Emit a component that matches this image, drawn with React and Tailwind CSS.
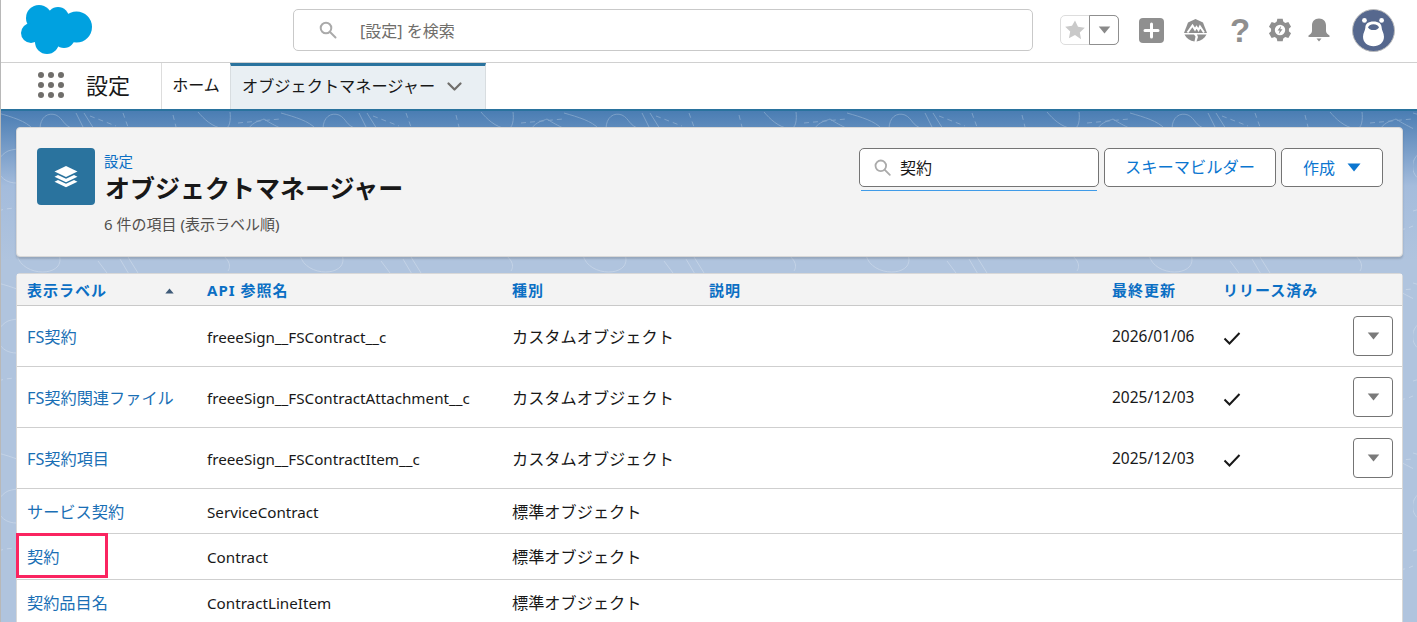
import React from "react";

const Caret = ({ cls = "" }) => (
  <svg viewBox="0 0 14 9" className={cls} fill="currentColor"><path d="M0.5 0.5h13L7 8.5z" /></svg>
);

const Cloud = () => (
  <svg width="72" height="50" viewBox="0 0 72 50" fill="#00a1e0" className="block">
    <circle cx="18" cy="13" r="13" />
    <circle cx="37" cy="13" r="11" />
    <circle cx="55.500" cy="22" r="15.500" />
    <circle cx="10" cy="28" r="10" />
    <circle cx="26" cy="37" r="12" />
    <circle cx="43" cy="32" r="11" />
    <rect x="10" y="12" width="40" height="22" />
  </svg>
);

const rows = [
  { h: "h-[61px]", label: "FS契約", api: "freeeSign__FSContract__c", kind: "カスタムオブジェクト", date: "2026/01/06", check: true },
  { h: "h-[61px]", label: "FS契約関連ファイル", api: "freeeSign__FSContractAttachment__c", kind: "カスタムオブジェクト", date: "2025/12/03", check: true },
  { h: "h-[61px]", label: "FS契約項目", api: "freeeSign__FSContractItem__c", kind: "カスタムオブジェクト", date: "2025/12/03", check: true },
  { h: "h-[45px]", label: "サービス契約", api: "ServiceContract", kind: "標準オブジェクト" },
  { h: "h-[46px]", label: "契約", api: "Contract", kind: "標準オブジェクト", mark: true },
  { h: "h-[46px]", label: "契約品目名", api: "ContractLineItem", kind: "標準オブジェクト" },
];

const cols = "grid grid-cols-[190px_305px_197px_403px_111px_130px_1fr] items-center";

const Contours = () => (
  <svg className="absolute inset-0 w-full h-full opacity-25" fill="none" stroke="#ffffff" strokeWidth="1">
    <defs>
      <pattern id="topo" x="-3" y="0" width="283" height="170" patternUnits="userSpaceOnUse">
        <path d="M0 2C14 6 28 10 35 18M42 18C42 6 50 1 58 4C66 8 64 14 76 18M78 2L86 18M86 2L96 18M200 1C206 8 214 16 226 18C232 18 233 8 232 1M250 18C256 10 262 10 266 8C272 12 276 14 284 18" />
        <path d="M92 5L118 15M125 2L130 16M175 4L178 16M240 12L282 8" strokeDasharray="5 4" />
        <path d="M10 40C40 30 60 60 30 70C0 80-10 50 10 40ZM90 30C120 20 150 40 140 60C130 80 90 70 90 30ZM190 40C220 30 260 50 250 80C240 100 190 90 190 40Z" />
        <path d="M110 40C125 36 135 45 130 55C122 65 105 58 110 40ZM205 50C220 44 240 55 236 72C228 84 200 75 205 50Z" />
        <path d="M0 100C30 90 50 110 80 105M100 90C120 110 150 120 180 105M200 110C230 100 250 130 283 115" strokeDasharray="5 4" />
        <path d="M20 130C40 120 70 140 60 155C50 168 10 160 20 130ZM100 150L115 170M122 148L135 170M130 146L145 170M170 140C200 125 240 145 230 160" />
      </pattern>
    </defs>
    <rect width="100%" height="100%" fill="url(#topo)" stroke="none" />
  </svg>
);

export default function App() {
  return (
    <div className="w-[1417px] h-[622px] overflow-hidden bg-white border-l border-[#b8b8b8] text-[#181818] font-['Noto_Sans','Noto_Sans_CJK_JP',sans-serif] text-[16px] flex flex-col">
      {/* global header */}
      <header className="h-[63px] shrink-0 flex items-center border-b border-[#d0d0d0] bg-white">
        <div className="w-[292px] pl-5 shrink-0 self-start pt-[5px]"><Cloud /></div>
        <div className="w-[740px] h-[42px] -mt-[3px] shrink-0 rounded-[5px] border border-[#c9c9c9] flex items-center text-[#706e6b] text-[16px]">
          <svg width="18" height="18" viewBox="0 0 18 18" fill="none" stroke="#aaaaaa" strokeWidth="2" className="ml-[25px]"><circle cx="7" cy="7" r="5.300" /><path d="M11 11l5.500 5.500" strokeLinecap="round" /></svg>
          <span className="ml-[23px] pt-[2px]">[設定] を検索</span>
        </div>
        <div className="ml-[27px] flex items-center -mt-[2px]">
          <div className="w-[59px] h-[30px] flex rounded-[5px] border border-[#dddddd]">
            <div className="w-[28px] flex items-center justify-center">
              <svg width="20" height="20" viewBox="0 0 20 20" fill="#c9c9c9"><path d="M10 0.500l3 6.300 6.800.9-5 4.700 1.300 6.800L10 15l-6.100 3.200 1.300-6.800-5-4.700 6.800-.9z" /></svg>
            </div>
            <div className="flex-1 -my-px -mr-px border border-[#8f8f8f] rounded-r-[5px] flex items-center justify-center text-[#8a8a8a]"><Caret cls="w-[13px] h-[8px]" /></div>
          </div>
          <div className="ml-[20px] w-[25px] h-[25px] rounded-[4px] bg-[#8f8f8f] flex items-center justify-center">
            <svg width="17" height="17" viewBox="0 0 17 17" stroke="#fff" strokeWidth="3" strokeLinecap="round"><path d="M8.500 2v13M2 8.500h13" /></svg>
          </div>
          <svg className="ml-[19px]" width="25" height="25" viewBox="0 0 25 25" fill="#8f8f8f">
            <path d="M12.500 1L20 4.500 24 15H1L5 4.500z" />
            <path d="M1.500 16.500h9.500l1.500 2-1 5C7 23 3.500 20.500 1.500 16.500zM14 16.500h9.500c-2 4-5.500 6.500-10 7l1.500-4.500z" />
            <path d="M4.500 14.500L9.500 7.500l2.500 4 1.500-2.500 2 3L17 8.500l4 6" fill="none" stroke="#fff" strokeWidth="2" />
          </svg>
          <div className="ml-[19px] w-[26px] text-center text-[#8f8f8f] text-[33px] leading-none font-bold font-['Liberation_Sans',sans-serif]">?</div>
          <svg className="ml-[15px]" width="24" height="24" viewBox="0 0 24 24" fill="#8f8f8f">
            <g>
              {[0, 60, 120, 180, 240, 300].map((a) => (
                <path key={a} transform={`rotate(${a} 12 12)`} d="M9.300 0.800h5.400l.8 4H8.500z" />
              ))}
            </g>
            <path fillRule="evenodd" d="M12 3a9 9 0 100 18 9 9 0 000-18zM12 6.800a5.200 5.200 0 110 10.400 5.200 5.200 0 010-10.400z" />
            <path d="M13.200 7.800l-3.700 4.700h2.200l-1 3.700 3.800-4.900h-2.200z" />
          </svg>
          <svg className="ml-[15px]" width="24" height="24" viewBox="0 0 24 24" fill="#8f8f8f">
            <path d="M12 0.500c-4.500 0-7 3-7 7v5.500c0 2-1.500 3-3.500 4.500v1.500h21v-1.500c-2-1.500-3.500-2.500-3.500-4.500V7.500c0-4-2.500-7-7-7z" />
            <path d="M9.500 20.500h5L12 23.500z" />
          </svg>
          <div className="ml-[21px] w-[43px] h-[43px] rounded-full bg-[#56688e] border border-[#bdbdbd] relative overflow-hidden">
            <svg viewBox="0 0 43 43" className="absolute inset-0 w-full h-full">
              <circle cx="12" cy="11" r="2.500" fill="#fff" />
              <circle cx="30" cy="11" r="2.500" fill="#fff" />
              <path d="M21.500 12c5.500 0 8.500 2.500 8.500 6 0 3 2.500 6 2.500 10 0 6-5 10-11 10s-11-4-11-10c0-4 2.500-7 2.500-10 0-3.500 3-6 8.500-6z" fill="#fff" />
              <ellipse cx="21.500" cy="18" rx="5.500" ry="3" fill="#56688e" />
            </svg>
          </div>
        </div>
      </header>

      {/* nav bar */}
      <nav className="h-[46px] shrink-0 flex bg-white">
        <div className="w-[161px] border-r border-[#dddddd] flex items-center pb-[2px]">
          <div className="ml-[37px] grid grid-cols-3 gap-[4px]">
            {Array.from({ length: 9 }).map((_, i) => (
              <span key={i} className="block w-[6px] h-[6px] rounded-full bg-[#706e6b]" />
            ))}
          </div>
          <span className="ml-[22px] text-[22px] leading-none">設定</span>
        </div>
        <div className="w-[68px] flex items-center justify-center text-[16px] pb-[2px]">ホーム</div>
        <div className="w-[256px] border-t-[3px] border-[#2a739e] border-x border-x-[#d8dde0] bg-[#e9eff3] flex items-center pl-[11px] text-[16.200px] pb-[2px]">
          <span className="whitespace-nowrap">オブジェクトマネージャー</span>
          <svg className="ml-[12px]" width="15" height="9" viewBox="0 0 15 9" fill="none" stroke="#706e6b" strokeWidth="2.200" strokeLinecap="round" strokeLinejoin="round"><path d="M1.500 1.500L7.500 7.500l6-6" /></svg>
        </div>
      </nav>

      {/* content */}
      <main className="relative flex-1 border-t-[2px] border-[#2a739e] bg-gradient-to-b from-[#4a7db3] via-[#a4bcdc] to-[#b0c4de] bg-[length:100%_150px] bg-no-repeat bg-[#b0c4de] pl-[15px] pr-[14px] pt-[16px]">
        <Contours />
        <section className="relative h-[130px] rounded-[4px] bg-[#f3f3f3] border border-[#d8d8d8] shadow-[0_2px_2px_rgba(0,0,0,0.15)] flex">
          <div className="ml-[20px] mt-[20px] w-[58px] h-[57px] rounded-[4px] bg-[#2a739e] flex items-center justify-center">
            <svg width="26" height="26" viewBox="0 0 26 26" fill="#fff">
              <path d="M13 2l11.500 5.500L13 13 1.500 7.500z" />
              <path d="M5 11l8 3.800L21 11l3.500 1.700L13 18.300 1.500 12.700z" />
              <path d="M5 16l8 3.800L21 16l3.500 1.700L13 23.300 1.500 17.700z" />
            </svg>
          </div>
          <div className="ml-[10px] mt-[22px] flex flex-col">
            <span className="text-[14.500px] leading-[22px] text-[#0b6fc4] -ml-px">設定</span>
            <h1 className="text-[25px] leading-[32px] font-bold">オブジェクトマネージャー</h1>
            <span className="text-[15px] leading-[20px] text-[#514f4d] mt-[10px] -ml-px">6 件の項目 (表示ラベル順)</span>
          </div>
          <div className="ml-auto mr-[19px] mt-[20px] flex items-start gap-[5px]">
            <div className="relative">
              <div className="w-[240px] h-[39px] rounded-[5px] border border-[#747474] bg-white flex items-center">
                <svg width="17" height="17" viewBox="0 0 17 17" fill="none" stroke="#aaaaaa" strokeWidth="1.800" className="ml-[14px]"><circle cx="6.800" cy="6.800" r="5.300" /><path d="M10.800 10.800l5 5" strokeLinecap="round" /></svg>
                <span className="ml-[9px] text-[16px]">契約</span>
              </div>
              <div className="absolute left-[2px] right-[2px] top-[42px] h-px bg-[#3f9be8]" />
            </div>
            <button className="w-[172px] h-[39px] rounded-[5px] border border-[#747474] bg-white text-[#0b76d0] text-[16.250px]">スキーマビルダー</button>
            <button className="w-[102px] h-[39px] rounded-[5px] border border-[#747474] bg-white text-[#0b76d0] text-[16px] flex items-center justify-center gap-[12px]">
              <span>作成</span><Caret cls="w-[14px] h-[9px]" />
            </button>
          </div>
        </section>

        <section className="relative mt-[16px] rounded-t-[4px] border border-[#d8d8d8] bg-white">
          <div className={`${cols} h-[32px] pt-[2px] bg-[#f3f3f3] border-b border-[#c9c9c9] text-[#0b6fc4] font-bold text-[15px] tracking-[1px]`}>
            <div className="pl-[10px] flex items-center">
              <span className="whitespace-nowrap">表示ラベル</span>
              <Caret cls="ml-[58px] w-[9px] h-[6px] rotate-180 text-[#3e5a78]" />
            </div>
            <div>API 参照名</div>
            <div>種別</div>
            <div>説明</div>
            <div>最終更新</div>
            <div className="whitespace-nowrap">リリース済み</div>
            <div />
          </div>
          {rows.map((r) => (
            <div key={r.label} className={`${cols} ${r.h} relative border-b border-[#cfcfcf] text-[16.200px]`}>
              <div className="pl-[10px] pt-[2px] text-[#1a6fb5] whitespace-nowrap">{r.label}</div>
              <div className="pt-[2px] text-[15.200px] whitespace-nowrap">{r.api}</div>
              <div className="pt-[2px] whitespace-nowrap">{r.kind}</div>
              <div />
              <div className="pt-[2px] text-[15.500px]">{r.date}</div>
              <div className="pt-[4px]">
                {r.check && (
                  <svg width="18" height="14" viewBox="0 0 18 14" fill="none" stroke="#181818" strokeWidth="2" className="block"><path d="M1.500 7.500L6.500 12.500L16.500 2" /></svg>
                )}
              </div>
              <div>
                {r.check && (
                  <div className="w-[40px] h-[40px] rounded-[4px] border border-[#747474] bg-white flex items-center justify-center text-[#7a7a7a]">
                    <Caret cls="w-[13px] h-[8px]" />
                  </div>
                )}
              </div>
              {r.mark && (
                <div className="absolute left-[-1px] top-[-1px] w-[92px] h-[45px] border-[3px] border-[#fa2460]" />
              )}
            </div>
          ))}
        </section>
      </main>
    </div>
  );
}
